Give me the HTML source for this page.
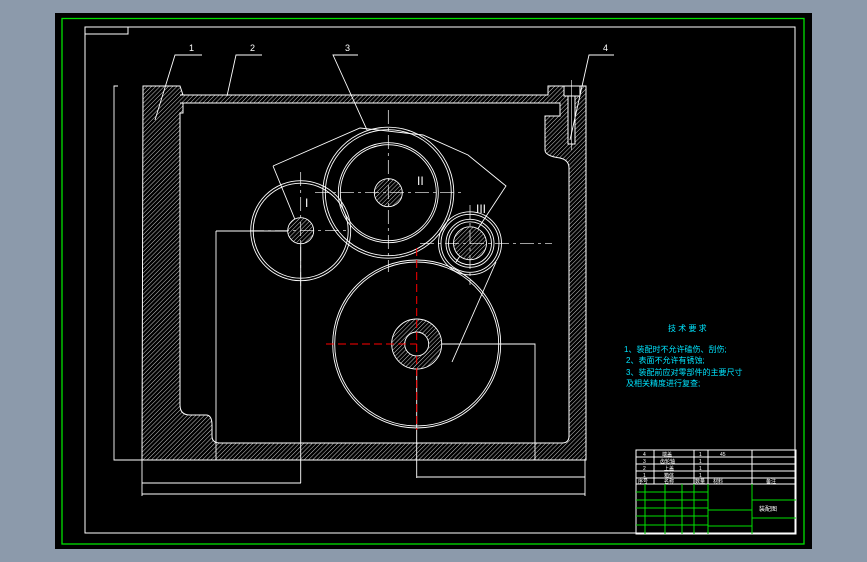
<!DOCTYPE html>
<html><head><meta charset="utf-8"><style>
html,body{margin:0;padding:0;background:#8c9aab;}
svg{display:block}
text{font-family:"Liberation Sans","Noto Sans CJK SC",sans-serif;}
</style></head><body>
<svg width="867" height="562" viewBox="0 0 867 562" xmlns="http://www.w3.org/2000/svg">
<defs>
<pattern id="h" width="3" height="3" patternUnits="userSpaceOnUse" patternTransform="rotate(45)">
<rect width="3" height="3" fill="#000"/><line x1="0" y1="0" x2="0" y2="3" stroke="#fff" stroke-width="0.8"/>
</pattern>
</defs>
<rect x="0" y="0" width="867" height="562" fill="#8c9aab"/>
<rect x="55" y="13" width="757" height="536" fill="#000"/>
<rect x="62" y="18.5" width="742" height="525.5" fill="none" stroke="#00e000" stroke-width="1.3"/>
<rect x="85" y="27" width="710" height="506" fill="none" stroke="#fff" stroke-width="1"/>
<polyline points="85,34 128,34 128,27" fill="none" stroke="#fff"/>

<!-- housing hatched body -->
<path d="M143,86 H180 L183,95 H548 L548,86 H586 V460 H142 Z
 M180,113 V405 Q180,415 190,415 H206 Q212,415 212,425 V436 Q212,443 220,443 H562 Q569,443 569,436 V168 Q569,160 560,158 Q545,156 545,150 V116 H560 L560,103 H183 L183,113 Z"
 fill="url(#h)" fill-rule="evenodd" stroke="#fff" stroke-width="1"/>
<line x1="180" y1="95" x2="548" y2="95" stroke="#fff"/>
<line x1="180" y1="103" x2="560" y2="103" stroke="#fff"/>
<!-- bolt -->
<rect x="564" y="86" width="16" height="10" fill="#000" stroke="#fff"/>
<rect x="568" y="96" width="7" height="48" fill="#000" stroke="#fff"/>
<line x1="571.5" y1="80" x2="571.5" y2="150" stroke="#fff" stroke-width="0.6"/>

<!-- leaders -->
<g stroke="#fff" fill="none" stroke-width="0.9">
<polyline points="155,120 175,55 202,55"/>
<polyline points="227,96 236,55 262,55"/>
<polyline points="367,130 333,55 358,55"/>
<polyline points="570,140 589,55 614,55"/>
</g>
<g fill="#fff" font-size="9">
<text x="189" y="51">1</text><text x="250" y="51">2</text><text x="345" y="51">3</text><text x="603" y="51">4</text>
</g>

<!-- dimension lines -->
<g stroke="#fff" stroke-width="0.9" fill="none">
<polyline points="118,86 114,86 114,460 142,460"/>
<line x1="142" y1="460" x2="142" y2="496"/>
<line x1="585" y1="460" x2="585" y2="496"/>
<line x1="142" y1="483" x2="301" y2="483"/>
<line x1="142" y1="494" x2="585" y2="494"/>
<line x1="416.7" y1="344" x2="416.7" y2="478"/>
<line x1="416.7" y1="477" x2="585" y2="477"/>
<polyline points="216,231 216,460"/>
<line x1="216" y1="231" x2="300" y2="231"/>
<line x1="300.7" y1="230" x2="300.7" y2="483"/>
<polyline points="416.7,344 535,344 535,460"/>
<polyline points="273,166 360,128 423,135 468,155 506,186 456,262"/>
<line x1="273" y1="166" x2="296" y2="222"/>
<line x1="496" y1="262" x2="452" y2="362"/>
</g>

<!-- gears -->
<g stroke="#fff" fill="none" stroke-width="0.9">
<circle cx="300.7" cy="230.7" r="50"/><circle cx="300.7" cy="230.7" r="47.5"/>
<circle cx="388.3" cy="192.7" r="65.5"/><circle cx="388.3" cy="192.7" r="63"/>
<circle cx="388.3" cy="192.7" r="50"/><circle cx="388.3" cy="192.7" r="48"/>
<circle cx="470" cy="243.3" r="31.5"/><circle cx="470" cy="243.3" r="29"/>
<circle cx="470" cy="243.3" r="24"/><circle cx="470" cy="243.3" r="21.5"/>
<circle cx="416.7" cy="344" r="84"/><circle cx="416.7" cy="344" r="82"/>
</g>
<g stroke="#fff" stroke-width="0.9">
<circle cx="300.7" cy="230.7" r="13" fill="url(#h)"/>
<circle cx="388.3" cy="192.7" r="14" fill="url(#h)"/>
<circle cx="470" cy="243.3" r="16.5" fill="url(#h)"/>
<circle cx="416.7" cy="344" r="25" fill="url(#h)"/>
<circle cx="416.7" cy="344" r="12" fill="#000"/>
</g>
<!-- centerlines -->
<g stroke="#fff" stroke-width="0.7" stroke-dasharray="14,4,3,4">
<line x1="250" y1="230.7" x2="350" y2="230.7"/><line x1="300.7" y1="172" x2="300.7" y2="290"/>
<line x1="315" y1="192.7" x2="462" y2="192.7"/><line x1="388.3" y1="110" x2="388.3" y2="272"/>
<line x1="420" y1="243.3" x2="552" y2="243.3"/><line x1="470" y1="205" x2="470" y2="285"/>
</g>
<g stroke="#f00" stroke-width="1" stroke-dasharray="8,4">
<line x1="416.7" y1="248" x2="416.7" y2="430"/>
<line x1="326" y1="344" x2="416.7" y2="344"/>
</g>
<g fill="#fff" font-family="Liberation Serif,serif" font-size="12">
<text x="305" y="207">I</text><text x="417" y="185">II</text><text x="476" y="213">III</text>
</g>

<!-- tech req -->
<g fill="#00e5ff" font-size="8">
<text x="668" y="331">技 术 要 求</text>
<text x="624" y="352">1、装配时不允许磕伤、刮伤;</text>
<text x="626" y="363">2、表面不允许有锈蚀;</text>
<text x="626" y="375">3、装配前应对零部件的主要尺寸</text>
<text x="626" y="386">及相关精度进行复查;</text>
</g>

<!-- title block -->
<g stroke="#fff" stroke-width="1" fill="none">
<rect x="636" y="450" width="160" height="84"/>
<line x1="636" y1="457" x2="796" y2="457"/><line x1="636" y1="464" x2="796" y2="464"/>
<line x1="636" y1="471" x2="796" y2="471"/><line x1="636" y1="478" x2="796" y2="478"/>
<line x1="636" y1="484" x2="796" y2="484"/>
<line x1="654" y1="450" x2="654" y2="484"/><line x1="694" y1="450" x2="694" y2="484"/>
<line x1="708" y1="450" x2="708" y2="484"/><line x1="752" y1="450" x2="752" y2="484"/>
</g>
<g stroke="#00e000" stroke-width="1" fill="none">
<line x1="636" y1="492" x2="708" y2="492"/><line x1="636" y1="500" x2="708" y2="500"/>
<line x1="636" y1="508" x2="708" y2="508"/><line x1="636" y1="516" x2="708" y2="516"/>
<line x1="636" y1="525" x2="708" y2="525"/>
<line x1="645" y1="484" x2="645" y2="534"/><line x1="665" y1="484" x2="665" y2="534"/>
<line x1="682" y1="484" x2="682" y2="534"/><line x1="694" y1="484" x2="694" y2="534"/>
<line x1="708" y1="484" x2="708" y2="534"/>
<line x1="752" y1="484" x2="752" y2="534"/>
<line x1="752" y1="500" x2="796" y2="500"/><line x1="752" y1="518" x2="796" y2="518"/>
<line x1="708" y1="510" x2="752" y2="510"/><line x1="708" y1="526" x2="752" y2="526"/>
</g>
<g fill="#fff" font-size="5">
<text x="643" y="456">4</text><text x="662" y="456">端盖</text><text x="699" y="456">1</text><text x="720" y="456">45</text>
<text x="643" y="463">3</text><text x="660" y="463">齿轮轴</text><text x="699" y="463">1</text>
<text x="643" y="470">2</text><text x="664" y="470">上盖</text><text x="699" y="470">1</text>
<text x="643" y="477">1</text><text x="664" y="477">箱体</text><text x="699" y="477">1</text>
<text x="638" y="483">序号</text><text x="664" y="483">名称</text><text x="695" y="483">数量</text><text x="713" y="483">材料</text><text x="766" y="483">备注</text>
<text x="759" y="511" font-size="6">装配图</text>
</g>
</svg>
</body></html>
